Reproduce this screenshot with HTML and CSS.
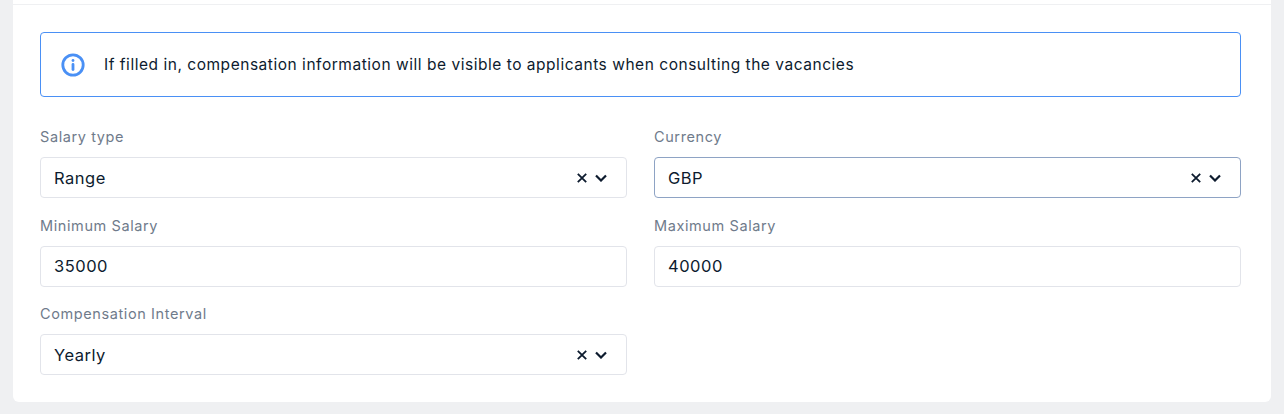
FILE: index.html
```html
<!DOCTYPE html>
<html lang="en">
<head>
  <meta charset="UTF-8" />
  <title>Compensation</title>
  <link rel="stylesheet" href="styles.css">
</head>
<body>
  <div class="card">
    <div class="card-head"></div>
    <div class="card-body">
      <div class="alert">
        <svg class="alert-icon" viewBox="0 0 24 24" width="24" height="24" fill="none" stroke="#4a90f5" stroke-width="2.8" stroke-linecap="round">
          <circle cx="12" cy="12" r="10.2"/>
          <path d="M12 11.5v5"/>
          <path d="M12 7.5v.1"/>
        </svg>
        <span>If filled in, compensation information will be visible to applicants when consulting the vacancies</span>
      </div>
      <div class="fields">
        <div class="field">
          <label>Salary type</label>
          <div class="control">
            <span class="value">Range</span>
            <svg class="icon" viewBox="0 0 10 10" width="10" height="10"><path d="M.8.8l8.400 8.400M9.200.8L.8 9.200"/></svg>
            <svg class="icon chevron" viewBox="0 0 12 8" width="12" height="8"><path d="M1 1.500l5 5 5-5"/></svg>
          </div>
        </div>
        <div class="field">
          <label>Currency</label>
          <div class="control focused">
            <span class="value">GBP</span>
            <svg class="icon" viewBox="0 0 10 10" width="10" height="10"><path d="M.8.8l8.400 8.400M9.200.8L.8 9.200"/></svg>
            <svg class="icon chevron" viewBox="0 0 12 8" width="12" height="8"><path d="M1 1.500l5 5 5-5"/></svg>
          </div>
        </div>
        <div class="field">
          <label>Minimum Salary</label>
          <div class="control"><span class="value">35000</span></div>
        </div>
        <div class="field">
          <label>Maximum Salary</label>
          <div class="control"><span class="value">40000</span></div>
        </div>
        <div class="field">
          <label>Compensation Interval</label>
          <div class="control">
            <span class="value">Yearly</span>
            <svg class="icon" viewBox="0 0 10 10" width="10" height="10"><path d="M.8.8l8.400 8.400M9.200.8L.8 9.200"/></svg>
            <svg class="icon chevron" viewBox="0 0 12 8" width="12" height="8"><path d="M1 1.500l5 5 5-5"/></svg>
          </div>
        </div>
      </div>
    </div>
  </div>
</body>
</html>
```

FILE: styles.css
```css
*{box-sizing:border-box;margin:0;padding:0}
html,body{height:414px;overflow:hidden}
body{background:#eff0f2;font-family:Inter,"Open Sans",Arial,sans-serif;color:#0d1b2e;padding:0 13px 12px}
.card{background:#fff;border-radius:0 0 6px 6px;height:402px}
.card-head{height:5px;border-bottom:1px solid #eff0f2}
.card-body{padding:27px 30px 0 27px}

.alert{display:flex;align-items:center;gap:19px;height:65px;padding:0 20px;border:1px solid #4a90f5;border-radius:4px;font-size:15.5px;letter-spacing:.53px;color:#0d1b2e}
.alert-icon{flex:none}

.fields{display:grid;grid-template-columns:587px 587px;column-gap:27px;row-gap:17.5px;margin-top:30px}
.field label{display:block;font-size:14.5px;line-height:20px;letter-spacing:.6px;color:#6f7b8b;margin-bottom:10px}
.control{display:flex;align-items:center;height:41px;padding:0 19px 0 13px;border:1px solid #e2e4ea;border-radius:4px;font-size:16.5px;letter-spacing:.5px}
.control.focused{border-color:#8ea3c4}
.value{flex:1}
.icon{fill:none;stroke:#0d1b2e;stroke-width:1.8;flex:none}
.chevron{margin-left:8px;stroke-width:2.2}
```
